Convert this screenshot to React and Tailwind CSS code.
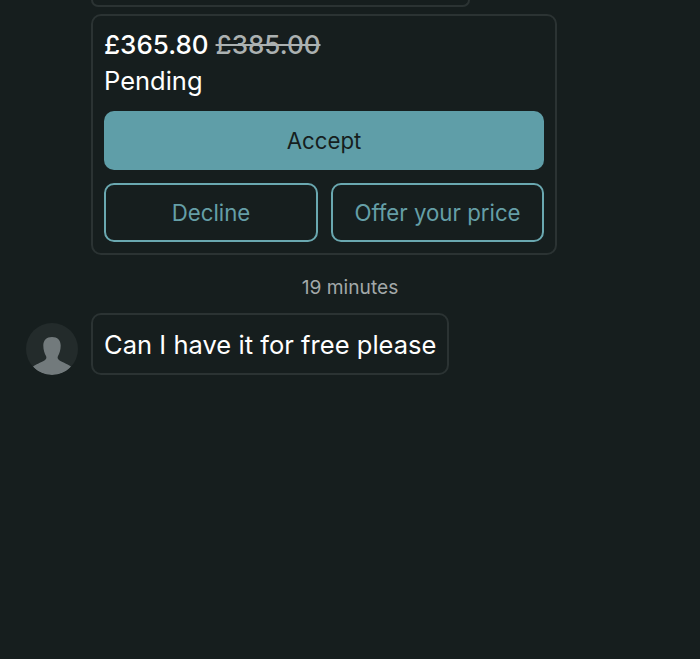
import React from 'react';

function Avatar() {
    return (
        <div className="w-[52px] h-[52px] shrink-0 rounded-full overflow-hidden bg-[#232b2b]">
            <svg viewBox="0 0 52 52" className="w-full h-full">
                <path
                    d="M26 14c-5.500 0-8.700 3.300-8.700 8.500 0 4.500 1.300 8 2.700 10.500.6 1.200.5 2.500-.5 3.500C17 39 11 40.500 7 43.500c4.500 5.500 11.500 8.500 19 8.500s14.500-3 19-8.500c-4-3-10-4.500-12.500-7-1-1-1.100-2.300-.5-3.500 1.400-2.500 2.700-6 2.700-10.500C34.700 17.300 31.500 14 26 14z"
                    fill="#727a7c"
                />
            </svg>
        </div>
    );
}

export default function App() {
    return (
        <div className="w-[700px] h-[659px] overflow-hidden bg-[#161e1e] font-['Inter',sans-serif] text-white">
            <div className="pl-[91px]">
                <div className="w-[379px] h-[7px] border-2 border-t-0 border-[#2b3333] rounded-b-[10px]" />
                <div className="mt-[7px] w-[466px] h-[241px] p-[11px] border-2 border-[#2b3333] rounded-[10px]">
                    <div className="text-[26px] leading-[36px] h-[36px] font-medium">
                        £365.80 <span className="line-through text-[#abb1b1]">£385.00</span>
                    </div>
                    <div className="text-[25.500px] leading-[36px] h-[36px]">Pending</div>
                    <button className="mt-[12px] w-full h-[59px] rounded-[10px] bg-[#5f9ea8] text-[#161e1e] text-[22.250px] pt-px">Accept</button>
                    <div className="mt-[13px] flex gap-[13px]">
                        <button className="w-[214px] h-[59px] rounded-[10px] border-2 border-[#6aa8b0] text-[#659fa7] text-[22.250px] pt-px">Decline</button>
                        <button className="flex-1 h-[59px] rounded-[10px] border-2 border-[#6aa8b0] text-[#659fa7] text-[22.250px] pt-px">Offer your price</button>
                    </div>
                </div>
            </div>
            <div className="mt-[18px] text-center text-[19.200px] leading-[28px] text-[#a3a9a9]">19 minutes</div>
            <div className="mt-[12px] pl-[26px] flex items-end gap-[13px]">
                <Avatar />
                <div className="h-[62px] pl-[11px] pr-[11px] pt-[2px] flex items-center border-2 border-[#2b3333] rounded-[10px] text-[25.500px] tracking-[0.03px]">Can I have it for free please</div>
            </div>
        </div>
    );
}
